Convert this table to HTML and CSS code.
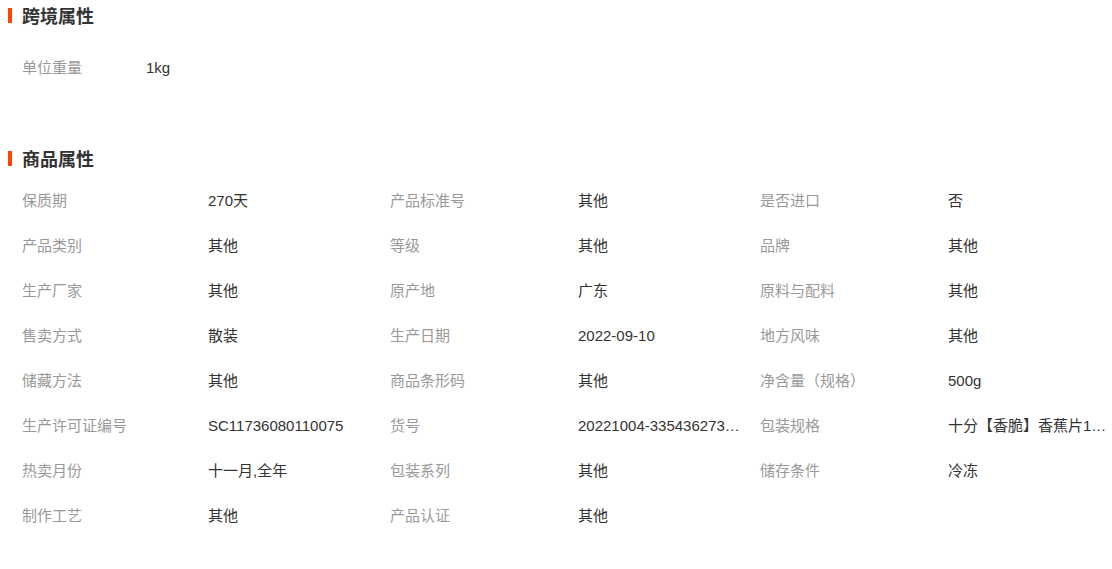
FILE: index.html
```html
<!DOCTYPE html>
<html lang="zh-CN">
<head>
  <meta charset="UTF-8">
  <meta name="viewport" content="width=device-width, initial-scale=1.0">
  <title>商品属性</title>
  <link rel="stylesheet" href="styles.css">
</head>
<body>

<div class="section section-cross">
  <h2 class="section-title"><span class="bar"></span>跨境属性</h2>
  <div class="attr-list single">
    <div class="attr">
      <span class="attr-name">单位重量</span>
      <span class="attr-value">1kg</span>
    </div>
  </div>
</div>

<div class="section section-goods">
  <h2 class="section-title"><span class="bar"></span>商品属性</h2>
  <div class="attr-list grid">
    <div class="attr"><span class="attr-name">保质期</span><span class="attr-value">270天</span></div>
    <div class="attr"><span class="attr-name">产品标准号</span><span class="attr-value">其他</span></div>
    <div class="attr"><span class="attr-name">是否进口</span><span class="attr-value">否</span></div>

    <div class="attr"><span class="attr-name">产品类别</span><span class="attr-value">其他</span></div>
    <div class="attr"><span class="attr-name">等级</span><span class="attr-value">其他</span></div>
    <div class="attr"><span class="attr-name">品牌</span><span class="attr-value">其他</span></div>

    <div class="attr"><span class="attr-name">生产厂家</span><span class="attr-value">其他</span></div>
    <div class="attr"><span class="attr-name">原产地</span><span class="attr-value">广东</span></div>
    <div class="attr"><span class="attr-name">原料与配料</span><span class="attr-value">其他</span></div>

    <div class="attr"><span class="attr-name">售卖方式</span><span class="attr-value">散装</span></div>
    <div class="attr"><span class="attr-name">生产日期</span><span class="attr-value">2022-09-10</span></div>
    <div class="attr"><span class="attr-name">地方风味</span><span class="attr-value">其他</span></div>

    <div class="attr"><span class="attr-name">储藏方法</span><span class="attr-value">其他</span></div>
    <div class="attr"><span class="attr-name">商品条形码</span><span class="attr-value">其他</span></div>
    <div class="attr"><span class="attr-name">净含量（规格）</span><span class="attr-value">500g</span></div>

    <div class="attr"><span class="attr-name">生产许可证编号</span><span class="attr-value">SC11736080110075</span></div>
    <div class="attr"><span class="attr-name">货号</span><span class="attr-value" title="20221004-335436273501">20221004-335436273501</span></div>
    <div class="attr"><span class="attr-name">包装规格</span><span class="attr-value" title="十分【香脆】香蕉片1000g">十分【香脆】香蕉片1000g</span></div>

    <div class="attr"><span class="attr-name">热卖月份</span><span class="attr-value">十一月,全年</span></div>
    <div class="attr"><span class="attr-name">包装系列</span><span class="attr-value">其他</span></div>
    <div class="attr"><span class="attr-name">储存条件</span><span class="attr-value">冷冻</span></div>

    <div class="attr"><span class="attr-name">制作工艺</span><span class="attr-value">其他</span></div>
    <div class="attr"><span class="attr-name">产品认证</span><span class="attr-value">其他</span></div>
  </div>
</div>

</body>
</html>
```

FILE: styles.css
```css
body {
  margin: 0;
  padding: 0;
  background-color: #fff;
  font-family: "Liberation Sans", "Noto Sans CJK SC", sans-serif;
  font-size: 15px;
  color: #333;
}
.section {
  padding-left: 8px;
}
.section-goods {
  margin-top: 53px;
}
.section-title {
  display: flex;
  align-items: center;
  gap: 10px;
  height: 30px;
  margin: 0;
  font-size: 18px;
  font-weight: bold;
  color: #333;
}
.section-title .bar {
  width: 4px;
  height: 15px;
  background-color: #ff4400;
}
.attr-list {
  padding-left: 14px;
}
.attr-list.single {
  margin-top: 15px;
}
.attr-list.single .attr-name {
  width: 124px;
}
.attr-list.grid {
  display: grid;
  grid-template-columns: 368px 370px 370px;
  margin-top: 5px;
}
.attr {
  display: flex;
  height: 45px;
  line-height: 45px;
}
.attr-name {
  width: 186px;
  flex-shrink: 0;
  color: #999;
}
.grid .attr:nth-child(3n+2) .attr-name,
.grid .attr:nth-child(3n) .attr-name {
  width: 188px;
}
.attr-value {
  max-width: 162px;
  white-space: nowrap;
  overflow: hidden;
  text-overflow: ellipsis;
  color: #333;
}
```
